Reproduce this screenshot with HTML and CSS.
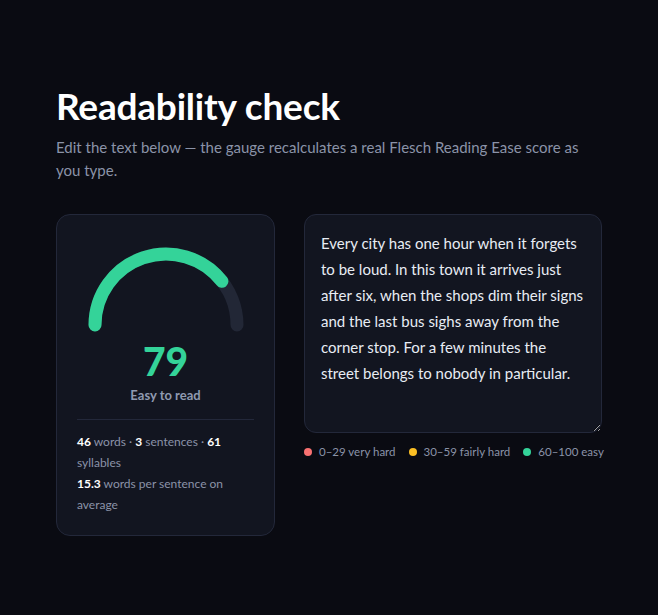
FILE: index.html
```html
<!DOCTYPE html>
<html lang="en">
<head>
    <meta charset="UTF-8">
    <meta name="viewport" content="width=device-width, initial-scale=1.0">
    <title>Readability check</title>
    <link rel="stylesheet" href="styles.css">
</head>
<body>

<main class="page">
    <h1>Readability check</h1>
    <p class="lead">Edit the text below — the gauge recalculates a real Flesch Reading Ease score as you type.</p>

    <div class="layout">
        <!-- Score card -->
        <section class="score-card">
            <svg class="gauge" viewBox="0 0 160 88" width="160" height="88">
                <path d="M 9 79 A 71 71 0 0 1 151 79" class="gauge-track"/>
                <path d="M 9 79 A 71 71 0 0 1 135.9 35.3" class="gauge-fill"/>
            </svg>
            <div class="score">79</div>
            <div class="score-label">Easy to read</div>
            <div class="stats">
                <p><strong>46</strong> words · <strong>3</strong> sentences · <strong>61</strong> syllables</p>
                <p><strong>15.3</strong> words per sentence on average</p>
            </div>
        </section>

        <!-- Editor -->
        <section class="editor">
            <textarea class="text-input" spellcheck="false">Every city has one hour when it forgets to be loud. In this town it arrives just after six, when the shops dim their signs and the last bus sighs away from the corner stop. For a few minutes the street belongs to nobody in particular.</textarea>
            <div class="legend">
                <span class="legend-item"><i class="dot dot-hard"></i>0–29 very hard</span>
                <span class="legend-item"><i class="dot dot-fair"></i>30–59 fairly hard</span>
                <span class="legend-item"><i class="dot dot-easy"></i>60–100 easy</span>
            </div>
        </section>
    </div>
</main>

</body>
</html>
```

FILE: styles.css
```css
* {
    margin: 0;
    padding: 0;
    box-sizing: border-box;
}

body {
    font-family: 'Lato', 'Noto Sans', sans-serif;
    background-color: #0a0b12;
    color: #e8ecf4;
}

.page {
    width: 546px;
    margin: 0 auto;
    padding-top: 84px;
}

h1 {
    font-size: 37px;
    font-weight: 700;
    color: #ffffff;
    line-height: 44px;
    letter-spacing: -0.2px;
}

.lead {
    margin-top: 8px;
    font-size: 15px;
    line-height: 23px;
    color: #8b93a8;
}

.layout {
    display: grid;
    grid-template-columns: 219px minmax(0, 1fr);
    gap: 29px;
    margin-top: 32px;
}

.score-card {
    background-color: #121520;
    border: 1px solid #23283a;
    border-radius: 14px;
    padding: 31px 20px 20px;
    display: flex;
    flex-direction: column;
    align-items: center;
}

.gauge {
    display: block;
}

.gauge path {
    fill: none;
    stroke-width: 13;
    stroke-linecap: round;
}

.gauge-track {
    stroke: #222736;
}

.gauge-fill {
    stroke: #34d399;
}

.score {
    margin-top: 7px;
    font-size: 39px;
    font-weight: 900;
    line-height: 40px;
    color: #34d399;
}

.score-label {
    margin-top: 5px;
    font-size: 13px;
    font-weight: 700;
    color: #8f9ab0;
    line-height: 18px;
}

.stats {
    align-self: stretch;
    margin-top: 15px;
    padding-top: 11px;
    border-top: 1px solid #23283a;
    font-size: 12px;
    line-height: 21px;
    color: #8b93a8;
}

.stats p {
    line-height: 21px;
}

.stats strong {
    color: #ffffff;
    font-weight: 700;
}

.editor {
    display: flex;
    flex-direction: column;
    min-width: 0;
}

.text-input {
    height: 219px;
    width: 100%;
    background-color: #121520;
    border: 1px solid #23283a;
    border-radius: 12px;
    padding: 15px 16px;
    font-family: 'Lato', 'Noto Sans', sans-serif;
    font-size: 15px;
    line-height: 26px;
    color: #e8ecf4;
    resize: vertical;
    outline: none;
}

.legend {
    display: flex;
    gap: 13px;
    margin-top: 12px;
    font-size: 11.5px;
    color: #8b93a8;
    white-space: nowrap;
}

.legend-item {
    display: flex;
    align-items: center;
    gap: 7px;
}

.dot {
    width: 8px;
    height: 8px;
    border-radius: 50%;
}

.dot-hard {
    background-color: #f87171;
}

.dot-fair {
    background-color: #fbbf24;
}

.dot-easy {
    background-color: #34d399;
}
```
